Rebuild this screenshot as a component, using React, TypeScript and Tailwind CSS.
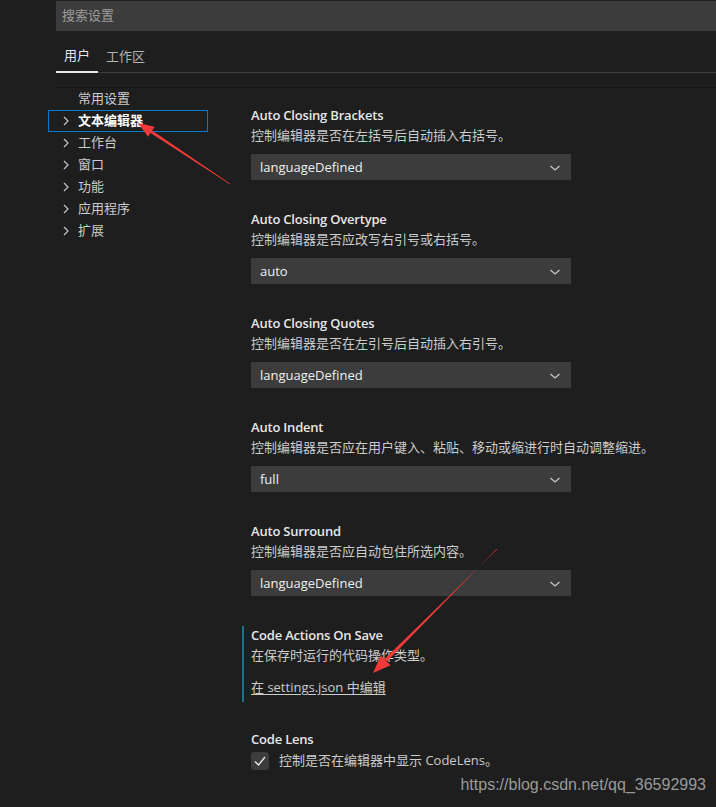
const font = "font-['Open_Sans','Noto_Sans_CJK_SC',sans-serif]";

const navItems = [
  { label: "常用设置", chevron: false },
  { label: "文本编辑器", chevron: true, active: true },
  { label: "工作台", chevron: true },
  { label: "窗口", chevron: true },
  { label: "功能", chevron: true },
  { label: "应用程序", chevron: true },
  { label: "扩展", chevron: true },
];

const selects = [
  { title: "Auto Closing Brackets", desc: "控制编辑器是否在左括号后自动插入右括号。", value: "languageDefined" },
  { title: "Auto Closing Overtype", desc: "控制编辑器是否应改写右引号或右括号。", value: "auto" },
  { title: "Auto Closing Quotes", desc: "控制编辑器是否在左引号后自动插入右引号。", value: "languageDefined" },
  { title: "Auto Indent", desc: "控制编辑器是否应在用户键入、粘贴、移动或缩进行时自动调整缩进。", value: "full" },
  { title: "Auto Surround", desc: "控制编辑器是否应自动包住所选内容。", value: "languageDefined" },
];

function Chevron({ className }: { className?: string }) {
  return (
    <svg width="8" height="10" viewBox="0 0 8 10" className={className}>
      <path d="M2 1 L6 5 L2 9" fill="none" stroke="#c5c5c5" strokeWidth="1.2" />
    </svg>
  );
}

function SelectBox({ value }: { value: string }) {
  return (
    <div className="w-[320px] h-[26px] bg-[#3c3c3c] flex items-center justify-between pl-[9px] pr-[10px] pt-[1px] text-[13px] text-[#f0f0f0]">
      <span>{value}</span>
      <svg width="12" height="8" viewBox="0 0 12 8">
        <path d="M1.5 2 L6 6 L10.5 2" fill="none" stroke="#c5c5c5" strokeWidth="1.3" />
      </svg>
    </div>
  );
}

function Title({ children }: { children: React.ReactNode }) {
  return (
    <div className="h-[20px] leading-[20px] text-[13px] tracking-[-0.2px] font-semibold text-[#e7e7e7]">{children}</div>
  );
}

function Desc({ children }: { children: React.ReactNode }) {
  return <div className="h-[20px] leading-[20px] text-[13px] text-[#cccccc]">{children}</div>;
}

export default function App() {
  return (
    <div className={`relative w-[716px] h-[807px] overflow-hidden bg-[#1e1e1e] ${font}`}>
      {/* search */}
      <div className="ml-[56px] mt-[1px] h-[30px] bg-[#3c3c3c] flex items-center pl-[6px] text-[13px] text-[#9d9d9d]">
        搜索设置
      </div>

      {/* tabs */}
      <div className="ml-[56px] mt-[13px] h-[29px] border-b border-[#3f3f3f] flex text-[13px]">
        <div className="w-[42px] flex justify-center items-center pb-[3px] border-b-2 border-[#e7e7e7] -mb-[1px] text-[#e7e7e7]">
          用户
        </div>
        <div className="ml-[8px] flex items-center pb-[3px] text-[#b4b4b4]">工作区</div>
      </div>
      <div className="ml-[56px] mt-[14px] h-[1px] bg-[#141414]" />

      <div className="flex">
        {/* nav */}
        <div className="ml-[48px] w-[160px] shrink-0">
          {navItems.map((item) => (
            <div
              key={item.label}
              className={`h-[22px] flex items-center text-[13px] ${
                item.active ? "border border-[#0a7ad1] font-bold text-white" : "border border-transparent text-[#cccccc]"
              }`}
            >
              <div className="w-[29px] flex justify-end pr-[8px]">{item.chevron && <Chevron />}</div>
              <span>{item.label}</span>
            </div>
          ))}
        </div>

        {/* settings */}
        <div className="ml-[43px] pt-[17px]">
          {selects.map((s) => (
            <div key={s.title} className="h-[104px]">
              <Title>{s.title}</Title>
              <Desc>{s.desc}</Desc>
              <div className="mt-[9px]">
                <SelectBox value={s.value} />
              </div>
            </div>
          ))}

          <div className="h-[104px] -ml-[9px] flex">
            <div className="w-[2px] h-[76px] mt-[1px] bg-[#177392]" />
            <div className="ml-[7px]">
              <Title>Code Actions On Save</Title>
              <Desc>在保存时运行的代码操作类型。</Desc>
              <div className="mt-[12px] h-[20px] leading-[20px] text-[13px] text-[#cccccc] underline underline-offset-2">
                在 settings.json 中编辑
              </div>
            </div>
          </div>

          <div>
            <Title>Code Lens</Title>
            <div className="mt-[2px] flex items-center">
              <div className="w-[18px] h-[18px] rounded-[3px] bg-[#3c3c3c] flex items-center justify-center">
                <svg width="14" height="14" viewBox="0 0 14 14">
                  <path d="M2 7.5 L5.5 11 L12 3" fill="none" stroke="#e8e8e8" strokeWidth="1.4" />
                </svg>
              </div>
              <span className="ml-[10px] text-[13px] text-[#cccccc]">控制是否在编辑器中显示 CodeLens。</span>
            </div>
          </div>
        </div>
      </div>

      {/* watermark */}
      <div className="absolute right-[10px] bottom-[10px] text-[16px] text-[#9a9a9a] font-['Liberation_Sans',sans-serif]">
        https://blog.csdn.net/qq_36592993
      </div>

      {/* annotation arrows */}
      <svg className="absolute inset-0 pointer-events-none" width="716" height="807">
        <polygon points="230.2,183.8 229.8,184.2 150.5,133.1 152.1,130.6" fill="#f03a3a" />
        <polygon points="138,123 154.6,126.85 148,136.85" fill="#f03a3a" />
        <polygon points="497.2,549.2 496.8,548.8 386.9,661.5 384.5,659.1" fill="#f03a3a" />
        <polygon points="373,673 390.6,665.2 380.8,655.4" fill="#f03a3a" />
      </svg>
    </div>
  );
}
